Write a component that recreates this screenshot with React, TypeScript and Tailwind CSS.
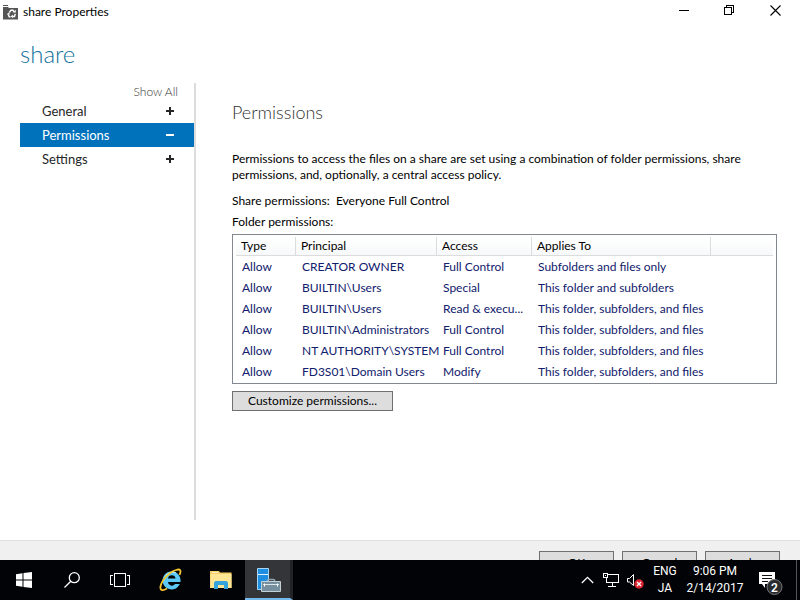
import React from "react";

type Row = { type: string; principal: string; access: string; applies: string };

const rows: Row[] = [
  { type: "Allow", principal: "CREATOR OWNER", access: "Full Control", applies: "Subfolders and files only" },
  { type: "Allow", principal: "BUILTIN\\Users", access: "Special", applies: "This folder and subfolders" },
  { type: "Allow", principal: "BUILTIN\\Users", access: "Read & execu...", applies: "This folder, subfolders, and files" },
  { type: "Allow", principal: "BUILTIN\\Administrators", access: "Full Control", applies: "This folder, subfolders, and files" },
  { type: "Allow", principal: "NT AUTHORITY\\SYSTEM", access: "Full Control", applies: "This folder, subfolders, and files" },
  { type: "Allow", principal: "FD3S01\\Domain Users", access: "Modify", applies: "This folder, subfolders, and files" },
];

const sections = [
  { name: "General", open: false },
  { name: "Permissions", open: true },
  { name: "Settings", open: false },
];

function ShareIcon() {
  return (
    <svg width="15" height="15" viewBox="0 0 15 15" aria-hidden="true">
      <path d="M0 0h5v1H0zM0 2h5.500v1H15v11.500H0z" fill="#555" />
      <path d="M6.300 7.500l1.700-2.200h2l1.200 1.600M12.300 8.800l-.8 2.700h-2M7.500 11.700H6.200L5.300 9.500" fill="none" stroke="#fff" strokeWidth="1.400" />
      <path d="M9.800 7.600h3V4.800zM9.800 9.500v3.800L7.700 11.500zM3.900 9.800l1.400-2.400 2 1.800z" fill="#fff" />
    </svg>
  );
}

function TitleBar() {
  return (
    <header className="flex h-6 shrink-0 items-center pr-0.5 pl-[3px] text-black">
      <ShareIcon />
      <h1 className="ml-[5px] flex-1 text-xs">share Properties</h1>
      <div className="flex h-full">
        <button aria-label="Minimize" className="flex w-[46px] items-center justify-center pb-1">
          <svg width="11" height="11" viewBox="0 0 11 11" shapeRendering="crispEdges"><path d="M0 5.500h10" stroke="#000" /></svg>
        </button>
        <button aria-label="Restore" className="flex w-[45px] items-center justify-center pb-1">
          <svg width="11" height="11" viewBox="0 0 11 11" fill="none" stroke="#000" shapeRendering="crispEdges"><path d="M.5 2.500h7v7h-7zM2.500 2V.5h7v7H8" /></svg>
        </button>
        <button aria-label="Close" className="flex w-[46px] items-center justify-center pb-1">
          <svg width="11" height="11" viewBox="0 0 11 11"><path d="M.5.5l10 10M10.500.5l-10 10" stroke="#000" strokeWidth="1.100" /></svg>
        </button>
      </div>
    </header>
  );
}

function Sidebar() {
  return (
    <nav className="w-[176px] shrink-0 border-r-2 border-[#dcdcdc]">
      <div className="flex h-4 justify-end pr-4">
        <a href="#all" className="text-xs leading-[18px] font-light text-[#333]">Show All</a>
      </div>
      {sections.map((s) => (
        <button
          key={s.name}
          className={
            s.open
              ? "flex h-6 w-full items-center justify-between bg-[#0072bc] pr-5 pl-[22px] text-[13px] text-white"
              : "flex h-6 w-full items-center justify-between pr-5 pl-[22px] text-[13px] text-[#262626]"
          }
        >
          <span className="pt-0.5">{s.name}</span>
          <svg width="8" height="8" viewBox="0 0 8 8" fill="none" stroke="currentColor" strokeWidth="2" shapeRendering="crispEdges">
            <path d={s.open ? "M0 4h8" : "M0 4h8M4 0v8"} />
          </svg>
        </button>
      ))}
    </nav>
  );
}

function PermissionsTable() {
  const head = "h-[19px] border-r border-b border-[#dcdcdc] p-0 pl-[5px] text-left font-normal";
  const cell = "whitespace-nowrap p-0 pl-[6px]";
  return (
    <div className="mt-1 border border-[#828790] px-[3px] pt-[2px] pb-px">
      <table className="w-full table-fixed border-separate border-spacing-0 text-xs">
        <colgroup>
          <col className="w-[60px]" />
          <col className="w-[141px]" />
          <col className="w-[95px]" />
          <col className="w-[179px]" />
          <col />
        </colgroup>
        <thead className="bg-linear-to-b from-white to-[#f7f8fa] text-black">
          <tr>
            <th className={head}>Type</th>
            <th className={head}>Principal</th>
            <th className={head}>Access</th>
            <th className={head}>Applies To</th>
            <th className="border-b border-[#dcdcdc] p-0" />
          </tr>
        </thead>
        <tbody className="text-[#10206c]">
          {rows.map((r, i) => (
            <tr key={i} className="h-[21px]">
              <td className={cell}>{r.type}</td>
              <td className={cell}>{r.principal}</td>
              <td className={cell}>{r.access}</td>
              <td className={cell}>{r.applies}</td>
              <td />
            </tr>
          ))}
        </tbody>
      </table>
    </div>
  );
}

function Taskbar() {
  return (
    <footer className="flex h-10 shrink-0 items-stretch bg-[#010307] font-['Roboto','Open_Sans',sans-serif] text-white">
      <button aria-label="Start" className="flex w-12 items-center justify-center">
        <svg width="16" height="16" viewBox="0 0 16 16" fill="#fff"><path d="M0 2.200L6.500 1.300V7.500H0zM7.500 1.100L16 0v7.500H7.500zM0 8.500h6.500v6.200L0 13.800zM7.500 8.500H16V16l-8.500-1.100z" /></svg>
      </button>
      <button aria-label="Search" className="flex w-12 items-center justify-center">
        <svg width="16" height="16" viewBox="0 0 16 16" fill="none" stroke="#fff" strokeWidth="1.300"><circle cx="10.300" cy="5.700" r="5" /><path d="M6.800 9.200L.5 15.500" /></svg>
      </button>
      <button aria-label="Task View" className="flex w-12 items-center justify-center">
        <svg width="20" height="14" viewBox="0 0 20 14" fill="none" stroke="#fff" shapeRendering="crispEdges"><path d="M4.500.5h11v13h-11zM3 2.500H.5v9H3M17 2.500h2.500v9H17" /></svg>
      </button>
      <button aria-label="Internet Explorer" className="flex w-[53px] items-center justify-center">
        <svg width="24" height="24" viewBox="0 0 24 24">
          <path d="M20.800 16A9 9 0 1 1 21.500 11.500v2.500H9a3.800 3.800 0 0 0 7 2zM9 10.500h7.500a3.800 3.800 0 0 0-7.500 0z" fill="#5cc8f5" />
          <path d="M6 9.500a8 8 0 0 1 11-4.500" fill="none" stroke="#b5ebff" strokeWidth="1.200" />
          <path d="M20.500 7c2-4.500 1-6.500-3.500-5C10 4 2.500 12.500 1.500 18.500c-.7 4.500 2.500 4.500 6.500 2" fill="none" stroke="#f6c52e" strokeWidth="1.800" />
        </svg>
      </button>
      <button aria-label="File Explorer" className="flex w-12 items-center justify-center">
        <svg width="22" height="19" viewBox="0 0 22 19">
          <path d="M0 0h9l1 1.500h11.500V17H0z" fill="#f5ce67" />
          <path d="M.5 3h21v14H.5z" fill="#ffe694" />
          <path d="M2 1.500h6" stroke="#fff3bf" />
          <path d="M4 18v-6.500L5.500 10h11l1.500 1.500V18h-4v-4H8v4z" fill="#36a4dc" />
        </svg>
      </button>
      <button aria-label="Server Manager" className="flex w-12 items-center justify-center border-r-[3px] border-b-2 border-r-[#222326] border-b-[#76b9ed] bg-[#343538] pt-[2px] pl-0.5">
        <svg width="24" height="24" viewBox="0 0 24 24">
          <path d="M.5.500h11v21H.5z" fill="#1e8fe0" stroke="#a5d6f7" />
          <path d="M1 6.500h10" stroke="#e2f3ff" />
          <path d="M10.500 14v-2l1-.5h5l1 .5v2" fill="none" stroke="#8fa5b0" strokeWidth="1.400" />
          <path d="M4.500 13.500h19v10h-19z" fill="#758f9e" stroke="#c3d0d6" />
          <path d="M6 16.500h16" stroke="#dce5e9" />
          <path d="M7.500 15.500v3M20.500 15.500v3" stroke="#fff" />
        </svg>
      </button>
      <div className="flex-1" />
      <button aria-label="Show hidden icons" className="flex w-6 items-center justify-center">
        <svg width="13" height="8" viewBox="0 0 13 8" fill="none" stroke="#fff" strokeWidth="1.300"><path d="M.8 7l5.700-5.700L12.200 7" /></svg>
      </button>
      <button aria-label="Network" className="flex w-6 items-center justify-center">
        <svg width="16" height="14" viewBox="0 0 16 14" fill="none" stroke="#fff" shapeRendering="crispEdges"><path d="M5 1.500h10.500v8H3.500V5M.5.5h4v4h-4zM2 2.500h1M9.500 10v3M5 13.500h8" /></svg>
      </button>
      <button aria-label="Volume muted" className="flex w-6 items-center justify-center pt-[2px]">
        <svg width="17" height="15" viewBox="0 0 17 15">
          <path d="M.5 4.500h2l4-4v11l-4-3.500h-2z" fill="none" stroke="#fff" />
          <circle cx="12" cy="10" r="4.700" fill="#dc2431" />
          <path d="M10 8l4 4M14 8l-4 4" stroke="#fff" strokeWidth="1.300" />
        </svg>
      </button>
      <button className="flex w-9 flex-col items-center justify-center text-xs leading-[17px]"><span>ENG</span><span>JA</span></button>
      <button className="flex w-16 flex-col items-center justify-center text-xs leading-[17px] whitespace-nowrap"><span>9:06 PM</span><span>2/14/2017</span></button>
      <button aria-label="2 notifications" className="flex w-[49px] items-center justify-center pt-[7px]">
        <svg width="26" height="26" viewBox="0 0 26 26">
          <path d="M0 1h16v12H6v4l-3-4H0z" fill="#fff" />
          <path d="M3 4.500h10M3 7.500h10M3 10.500h6" stroke="#111" />
          <circle cx="15.500" cy="16" r="7.500" fill="#292a2d" stroke="#77787a" />
          <text x="15.500" y="20.500" fill="#fff" fontSize="12" fontWeight="600" textAnchor="middle">2</text>
        </svg>
      </button>
      <div className="w-1 border-l border-[#55565a]" />
    </footer>
  );
}

export default function App() {
  const dialogButton = "h-6 w-[75px] shrink-0 border border-[#707070] bg-[#dddddd] text-xs text-black";
  return (
    <div className="flex h-screen flex-col overflow-hidden bg-white font-['Lato','Open_Sans',sans-serif]">
      <TitleBar />
      <h2 className="mt-[13px] ml-5 h-[35px] shrink-0 text-2xl leading-[34px] font-light text-[#15719b]">share</h2>
      <div className="mt-[11px] mb-5 flex min-h-0 flex-1 pl-5">
        <Sidebar />
        <main className="min-w-0 flex-1 pr-[23px] pl-9 text-xs text-black">
          <h3 className="mt-[15px] text-lg leading-7 font-light text-[#333]">Permissions</h3>
          <p className="mt-[25px] leading-4">
            Permissions to access the files on a share are set using a combination of folder permissions, share permissions, and, optionally, a central access policy.
          </p>
          <p className="mt-[10px] leading-4">Share permissions:&nbsp; Everyone Full Control</p>
          <p className="mt-[5px] leading-4">Folder permissions:</p>
          <PermissionsTable />
          <button className="mt-[7px] h-5 w-[161px] border border-[#707070] bg-[#dddddd] leading-4">Customize permissions...</button>
        </main>
      </div>
      <div className="flex h-5 shrink-0 justify-end gap-2 overflow-hidden border-t border-[#dfdfdf] bg-[#f0f0f0] pt-[10px] pr-5">
        <button className={dialogButton}>OK</button>
        <button className={dialogButton}>Cancel</button>
        <button className={dialogButton}>Apply</button>
      </div>
      <Taskbar />
    </div>
  );
}
